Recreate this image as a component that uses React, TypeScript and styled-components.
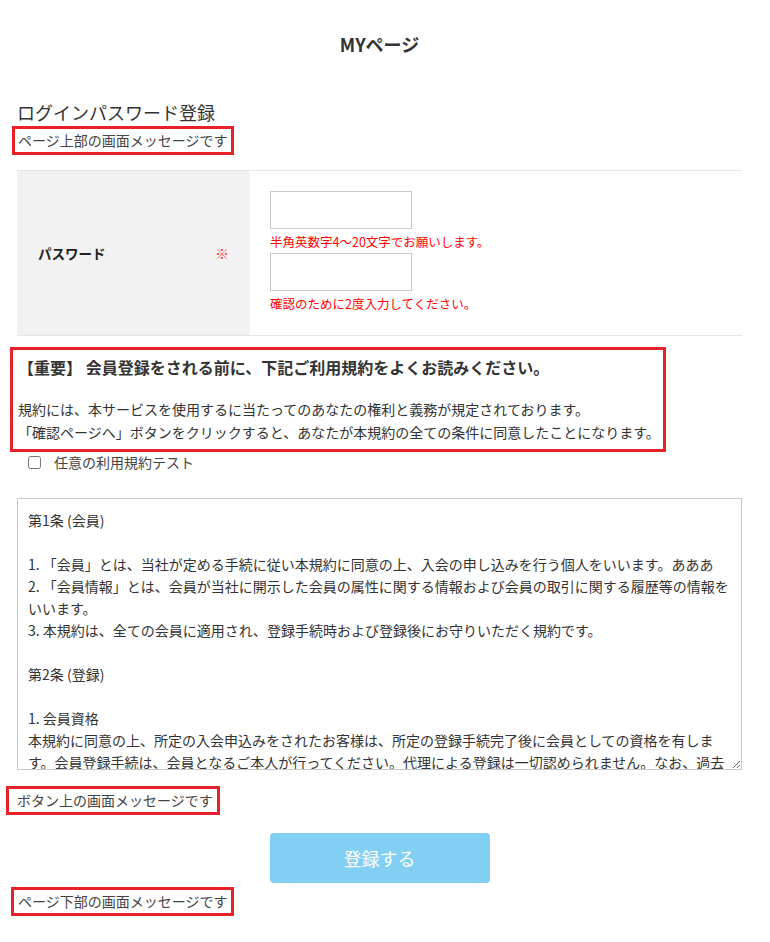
import React from 'react';
import styled, { createGlobalStyle } from 'styled-components';

const GlobalStyle = createGlobalStyle`
  body {
    margin: 0;
    background: #fff;
    color: #333;
    font-family: "Noto Sans CJK JP", "Noto Sans", sans-serif;
  }
`;

const terms = [
  '第1条 (会員)',
  '',
  '1. 「会員」とは、当社が定める手続に従い本規約に同意の上、入会の申し込みを行う個人をいいます。あああ',
  '2. 「会員情報」とは、会員が当社に開示した会員の属性に関する情報および会員の取引に関する履歴等の情報を',
  'いいます。',
  '3. 本規約は、全ての会員に適用され、登録手続時および登録後にお守りいただく規約です。',
  '',
  '第2条 (登録)',
  '',
  '1. 会員資格',
  '本規約に同意の上、所定の入会申込みをされたお客様は、所定の登録手続完了後に会員としての資格を有しま',
  'す。会員登録手続は、会員となるご本人が行ってください。代理による登録は一切認められません。なお、過去',
  'に会員資格が取り消された方やその他当社が相応しくないと判断した方からの会員申込はお断りする場合があります。',
].join('\n');

function App() {
  return (
    <Page>
      <GlobalStyle />
      <PageTitle>MYページ</PageTitle>
      <SectionTitle>ログインパスワード登録</SectionTitle>
      <MessageBox $offset={-5} $pad={3}>ページ上部の画面メッセージです</MessageBox>

      <FormTable>
        <LabelCell>
          <span>パスワード</span>
          <Required>※</Required>
        </LabelCell>
        <InputCell>
          <TextInput type="password" />
          <Help>半角英数字4～20文字でお願いします。</Help>
          <TextInput type="password" />
          <Help>確認のために2度入力してください。</Help>
        </InputCell>
      </FormTable>

      <NoticeBox>
        <NoticeTitle>【重要】 会員登録をされる前に、下記ご利用規約をよくお読みください。</NoticeTitle>
        <NoticeText>
          規約には、本サービスを使用するに当たってのあなたの権利と義務が規定されております。
          <br />
          「確認ページへ」ボタンをクリックすると、あなたが本規約の全ての条件に同意したことになります。
        </NoticeText>
      </NoticeBox>

      <CheckRow>
        <input type="checkbox" />
        <span>任意の利用規約テスト</span>
      </CheckRow>

      <Terms readOnly wrap="off" defaultValue={terms} />

      <MessageBox $offset={-11} $pad={8} $top={16}>ボタン上の画面メッセージです</MessageBox>
      <ButtonRow>
        <SubmitButton type="button">登録する</SubmitButton>
      </ButtonRow>
      <MessageBox $offset={-6} $pad={4} $top={4}>ページ下部の画面メッセージです</MessageBox>
    </Page>
  );
}

export default App;

const Page = styled.div`
  width: 725px;
  padding: 0 0 24px 17px;
`;

const PageTitle = styled.h1`
  margin: 0;
  padding-top: 31px;
  text-align: center;
  font-size: 18px;
  line-height: 26px;
  font-weight: 700;
  color: #333;
`;

const SectionTitle = styled.h2`
  margin: 41px 0 0;
  font-size: 18px;
  font-weight: 400;
  line-height: 28px;
  color: #333;
`;

const MessageBox = styled.div<{ $offset: number; $pad: number; $top?: number }>`
  display: table;
  margin-left: ${(p) => p.$offset}px;
  margin-top: ${(p) => p.$top ?? 0}px;
  padding: 0 4px 0 ${(p) => p.$pad}px;
  border: 3px solid #e8202a;
  font-size: 14px;
  line-height: 23px;
  color: #444;
`;

const FormTable = styled.div`
  display: grid;
  grid-template-columns: 233px 1fr;
  margin-top: 15px;
  border-top: 1px solid #e6e6e6;
  border-bottom: 1px solid #e6e6e6;
`;

const LabelCell = styled.div`
  display: flex;
  align-items: center;
  justify-content: space-between;
  padding: 0 21px;
  background: #f2f2f2;
  font-size: 13.5px;
  font-weight: 700;
  color: #222;
`;

const Required = styled.span`
  color: #ff3a3a;
  font-weight: 400;
  font-size: 14px;
`;

const InputCell = styled.div`
  padding: 20px 20px 20px;
`;

const TextInput = styled.input`
  display: block;
  box-sizing: border-box;
  width: 142px;
  height: 38px;
  margin: 0;
  border: 1px solid #c8c8c8;
  border-radius: 0;
  outline: none;
`;

const Help = styled.div`
  padding: 4px 0 2px;
  font-size: 12.5px;
  line-height: 18px;
  color: #ff0000;
`;

const NoticeBox = styled.div`
  display: table;
  margin: 11px 0 0 -7px;
  padding: 5px 3px 5px 5px;
  border: 3px solid #e8202a;
`;

const NoticeTitle = styled.h3`
  margin: 0;
  font-size: 16px;
  font-weight: 700;
  line-height: 24px;
  color: #333;
`;

const NoticeText = styled.p`
  margin: 19px 0 0;
  font-size: 14px;
  line-height: 23px;
  color: #333;
`;

const CheckRow = styled.label`
  display: flex;
  align-items: center;
  gap: 13px;
  height: 20px;
  padding-left: 11px;
  font-size: 14px;
  color: #444;

  input {
    width: 13px;
    height: 13px;
    margin: 0;
  }
`;

const Terms = styled.textarea`
  display: block;
  box-sizing: border-box;
  width: 725px;
  height: 272px;
  margin-top: 26px;
  padding: 10px;
  border: 1px solid #c8c8c8;
  overflow: hidden;
  resize: both;
  font-family: "Noto Sans CJK JP", "Noto Sans", sans-serif;
  font-size: 14px;
  line-height: 22px;
  color: #333;
  outline: none;
`;

const ButtonRow = styled.div`
  display: flex;
  justify-content: center;
  margin-top: 18px;
`;

const SubmitButton = styled.button`
  width: 220px;
  height: 50px;
  border: none;
  border-radius: 4px;
  background: #81d0f4;
  color: #fff;
  font-family: "Noto Sans CJK JP", "Noto Sans", sans-serif;
  font-size: 18px;
  cursor: pointer;
`;
